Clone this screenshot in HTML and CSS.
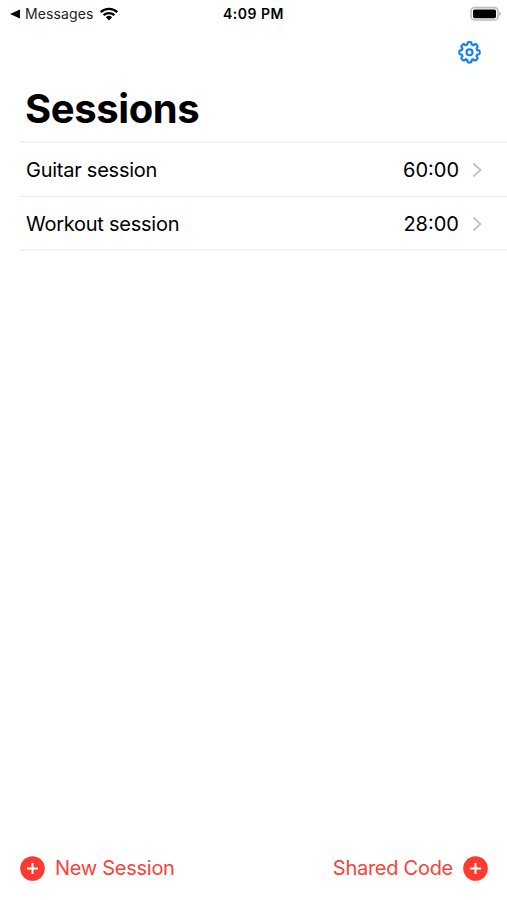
FILE: index.html
```
<!DOCTYPE html>
<html lang="en">
<head>
  <meta charset="utf-8">
  <title>Sessions</title>
  <link rel="stylesheet" href="styles.css">
</head>
<body>
  <div class="screen">

    <div class="status-bar">
      <div class="status-left">
        <svg class="back-icon" width="10" height="10" viewBox="0 0 10 10"><path d="M0 5L10 .5v9z"/></svg>
        <span class="back-app">Messages</span>
        <svg class="wifi" width="20" height="14" viewBox="0 0 20 14">
          <path d="M1.7 5.2a12 12 0 0 1 16.6 0M4.6 8.2a7.8 7.8 0 0 1 10.8 0" fill="none" stroke="#000" stroke-width="2.3"/>
          <path d="M10 13.4L6.9 10.3a4.5 4.5 0 0 1 6.2 0z"/>
        </svg>
      </div>
      <div class="clock">4:09 PM</div>
      <div class="status-right">
        <svg width="32" height="16" viewBox="0 0 32 16">
          <rect x="1" y="1.6" width="27" height="12.4" rx="3.6" fill="#fff" stroke="#bcbcbc" stroke-width="1.6"/>
          <rect x="3" y="3.4" width="23" height="8.8" rx="1.6"/>
          <path d="M29.2 5.4q1.7 .6 1.7 2.4t-1.7 2.4z" fill="#bcbcbc"/>
        </svg>
      </div>
    </div>

    <div class="nav-bar">
      <svg class="gear" width="24" height="24" viewBox="-12.5 -12.3 24 24">
        <path d="M-2.2-7.7L-1.9-9.6Q-1.7-10.3 0-10.3T1.9-9.6L2.2-7.7L3.9-7L5.45-8.13Q6.1-8.5 7.3-7.3T8.13-5.45L7-3.9L7.7-2.2L9.6-1.9Q10.3-1.7 10.3 0T9.6 1.9L7.7 2.2L7 3.9L8.13 5.45Q8.5 6.1 7.3 7.3T5.45 8.13L3.9 7L2.2 7.7L1.9 9.6Q1.7 10.3 0 10.3T-1.9 9.6L-2.2 7.7L-3.9 7L-5.45 8.13Q-6.1 8.5-7.3 7.3T-8.13 5.45L-7 3.9L-7.7 2.2L-9.6 1.9Q-10.3 1.7-10.3 0T-9.6-1.9L-7.7-2.2L-7-3.9L-8.13-5.45Q-8.5-6.1-7.3-7.3T-5.45-8.13L-3.9-7z"/>
        <circle r="3"/>
      </svg>
    </div>

    <h1 class="title">Sessions</h1>

    <ul class="session-list">
      <li class="session">
        <span class="session-name">Guitar session</span>
        <span class="session-time">60:00</span>
        <svg class="chevron" width="10" height="16" viewBox="0 0 10 16"><path d="M1.4 1.4L8.4 8l-7 6.6"/></svg>
      </li>
      <li class="session">
        <span class="session-name">Workout session</span>
        <span class="session-time">28:00</span>
        <svg class="chevron" width="10" height="16" viewBox="0 0 10 16"><path d="M1.4 1.4L8.4 8l-7 6.6"/></svg>
      </li>
    </ul>

    <div class="toolbar">
      <div class="action">
        <svg width="25" height="25" viewBox="0 0 25 25"><circle cx="12.5" cy="12.5" r="12.3"/><path d="M12.5 7v11M7 12.5h11"/></svg>
        <span>New Session</span>
      </div>
      <div class="action">
        <span>Shared Code</span>
        <svg width="25" height="25" viewBox="0 0 25 25"><circle cx="12.5" cy="12.5" r="12.3"/><path d="M12.5 7v11M7 12.5h11"/></svg>
      </div>
    </div>

  </div>
</body>
</html>
```
FILE: styles.css
```
* {
  box-sizing: border-box;
}

body {
  margin: 0;
  background: #fff;
  color: #000;
  font-family: Inter, "Liberation Sans", sans-serif;
}

svg {
  display: block;
  flex: none;
}

.screen {
  display: flex;
  flex-direction: column;
  height: 900px;
  overflow: hidden;
}

.status-bar {
  display: grid;
  grid-template-columns: 1fr auto 1fr;
  align-items: center;
  height: 27px;
  padding: 0 5px 0 10px;
  font-size: 14px;
}

.status-left {
  display: flex;
  align-items: center;
}

.back-app {
  margin: 0 6px 0 5px;
  color: #222;
  letter-spacing: 0.1px;
}

.clock {
  padding-right: 5px;
  font-weight: 600;
  letter-spacing: 0.5px;
}

.status-right {
  display: flex;
  justify-content: flex-end;
}

.nav-bar {
  display: flex;
  justify-content: flex-end;
  height: 51px;
  padding: 13px 26px 0 0;
}

.gear {
  fill: none;
  stroke: #107cf5;
  stroke-width: 2.1;
  stroke-linejoin: round;
}

.title {
  height: 63px;
  margin: 0;
  padding-left: 25px;
  font-size: 40px;
  font-weight: 700;
  line-height: 62px;
  letter-spacing: -0.4px;
}

.session-list {
  margin: 0 0 0 20px;
  padding: 0;
  list-style: none;
  border-top: 2px solid #f1f1f1;
}

.session {
  display: flex;
  align-items: center;
  height: 54px;
  padding: 0 25px 0 6px;
  border-bottom: 1px solid #e8e8e8;
  font-size: 20px;
}

.session:last-child {
  padding-top: 1px;
  border-bottom: 2px solid #f1f1f1;
}

.session-name {
  flex: 1;
  letter-spacing: -0.25px;
}

.session-time {
  margin-right: 13px;
}

.chevron {
  fill: none;
  stroke: #c4c4c6;
  stroke-width: 2;
}

.toolbar {
  display: flex;
  justify-content: space-between;
  height: 64px;
  margin-top: auto;
  padding: 0 19px 0 20px;
  color: #f9423a;
  font-size: 20px;
  letter-spacing: -0.27px;
}

.action {
  display: flex;
  align-items: center;
  gap: 10px;
}

.action circle {
  fill: #fc3a30;
}

.action path {
  stroke: #fff;
  stroke-width: 2;
}
```
